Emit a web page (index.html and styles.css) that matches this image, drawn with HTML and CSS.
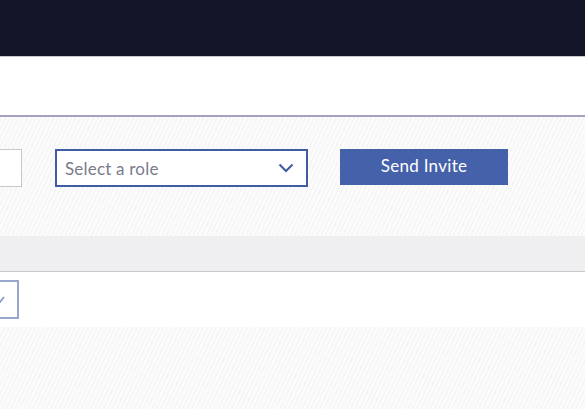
FILE: index.html
```html
<!DOCTYPE html>
<html lang="en">
<head>
  <meta charset="UTF-8" />
  <meta name="viewport" content="width=device-width, initial-scale=1.0"/>
  <title>Team | Invite members</title>
  <link rel="stylesheet" href="styles.css">
</head>
<body>
  <header class="topbar"></header>

  <div class="titlebar"></div>

  <section class="invite">
    <form class="invite-form">
      <input type="email" class="email-input" />
      <div class="role-select">
        <span class="role-placeholder">Select a role</span>
        <svg class="chevron" width="16" height="10" viewBox="0 0 16 10">
          <path d="M1.5 1.5 L8 8 L14.5 1.5" fill="none" stroke="#3f5ba3" stroke-width="2" />
        </svg>
      </div>
      <button type="button" class="send-btn">Send Invite</button>
    </form>
  </section>

  <div class="members">
    <div class="members-head"></div>
    <div class="member-row">
      <span class="check">
        <svg width="38" height="38" viewBox="0 0 38 38">
          <path d="M10 21 L16 27 L24 17" fill="none" stroke="#8e9fc9" stroke-width="2" />
        </svg>
      </span>
    </div>
  </div>
</body>
</html>
```

FILE: styles.css
```css
* {
  box-sizing: border-box;
  font-family: 'Lato', 'Open Sans', sans-serif;
}

html, body {
  margin: 0;
  padding: 0;
  overflow: hidden;
}

body {
  height: 409px;
  background: repeating-linear-gradient(115deg, #fbfbfb 0 2px, #f3f3f3 2px 3px, #fbfbfb 3px 4px);
}

.topbar {
  height: 57px;
  background: #141529;
  border-bottom: 1px solid #c9c9d4;
}

.titlebar {
  height: 60px;
  background: #fff;
  border-bottom: 2px solid #a3a2bf;
}

.invite {
  height: 119px;
  padding-top: 32px;
}

.invite-form {
  display: flex;
  align-items: flex-start;
  gap: 32px;
  margin-left: -178px;
}

.email-input {
  width: 200px;
  height: 38px;
  margin: 0 1px 0 0;
  border: 1px solid #c6c6cb;
  background: #fff;
}

.role-select {
  width: 253px;
  height: 38px;
  border: 2px solid #405ca4;
  background: #fff;
  display: flex;
  align-items: center;
  justify-content: space-between;
  padding: 0 12px 0 8px;
}

.role-placeholder {
  color: #797b8c;
  font-size: 17px;
  letter-spacing: 0.2px;
}

.chevron {
  display: block;
}

.send-btn {
  width: 168px;
  height: 36px;
  border: none;
  background: #4561aa;
  color: #fff;
  font-size: 17px;
  font-weight: 400;
  letter-spacing: 0.3px;
  padding: 0 0 3px;
  cursor: pointer;
}

.members-head {
  height: 36px;
  background: #efeff1;
  border-bottom: 1px solid #c8c8cd;
}

.member-row {
  height: 55px;
  background: #fff;
  padding-top: 8px;
}

.check {
  display: block;
  width: 39px;
  height: 39px;
  margin-left: -20px;
  border: 2px solid #97a7cd;
  background: #fff;
}

.check svg {
  display: block;
  margin: -2px;
}
```
